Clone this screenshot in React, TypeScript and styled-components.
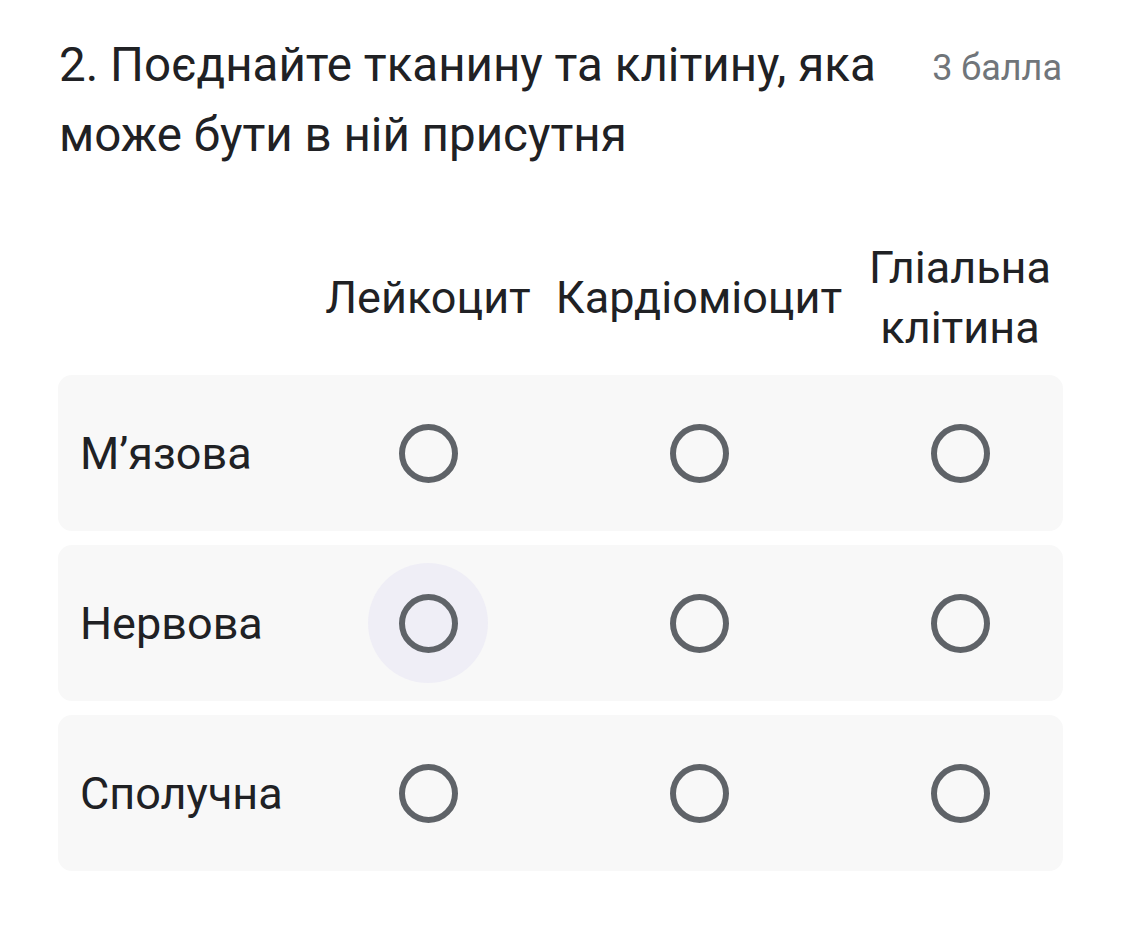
import React from 'react';
import styled, { createGlobalStyle } from 'styled-components';

const GlobalStyle = createGlobalStyle`
  html, body {
    margin: 0;
    padding: 0;
    background: #ffffff;
    font-family: Roboto, "Noto Sans", Arial, sans-serif;
    color: #202124;
  }
`;

const Page = styled.div`
  width: 1131px;
  padding: 30px 68px 0 58px;
  box-sizing: border-box;
`;

const Header = styled.div`
  display: flex;
  align-items: flex-start;
  justify-content: space-between;
`;

const Title = styled.div`
  font-size: 47.5px;
  line-height: 70px;
  padding-left: 1px;
  max-width: 850px;
`;

const Points = styled.div`
  font-size: 36px;
  line-height: 76px;
  color: #70757a;
  white-space: nowrap;
  margin-right: 1px;
`;

const Grid = styled.div`
  margin-top: 69px;
  display: flex;
  flex-direction: column;
  gap: 14px;
`;

const columns = '257px 226px 316px 206px';

const HeadRow = styled.div`
  display: grid;
  grid-template-columns: ${columns};
  align-items: center;
  min-height: 122px;
  padding-bottom: 0;
`;

const ColHead = styled.div`
  text-align: center;
  font-size: 45px;
  line-height: 60px;
  margin-top: -4px;
`;

const Row = styled.div`
  display: grid;
  grid-template-columns: ${columns};
  align-items: center;
  height: 156px;
  background: #f8f8f8;
  border-radius: 14px;
`;

const RowLabel = styled.div`
  font-size: 45px;
  padding-left: 22px;
`;

const Cell = styled.div`
  display: flex;
  justify-content: center;
  align-items: center;
`;

const Halo = styled.div<{ $active?: boolean }>`
  width: 120px;
  height: 120px;
  border-radius: 50%;
  display: flex;
  align-items: center;
  justify-content: center;
  background: ${({ $active }) => ($active ? '#efeef6' : 'transparent')};
`;

const Radio = styled.div`
  width: 59px;
  height: 59px;
  box-sizing: border-box;
  border: 6px solid #5f6368;
  border-radius: 50%;
`;

const cols = ['Лейкоцит', 'Кардіоміоцит', 'Гліальна клітина'];
const rows = ['М’язова', 'Нервова', 'Сполучна'];

export default function App() {
  return (
    <>
      <GlobalStyle />
      <Page>
        <Header>
          <Title>2. Поєднайте тканину та клітину, яка може бути в ній присутня</Title>
          <Points>3 балла</Points>
        </Header>
        <Grid>
          <HeadRow>
            <div />
            <ColHead>{cols[0]}</ColHead>
            <ColHead>{cols[1]}</ColHead>
            <ColHead>
              Гліальна
              <br />
              клітина
            </ColHead>
          </HeadRow>
          {rows.map((label, r) => (
            <Row key={label}>
              <RowLabel>{label}</RowLabel>
              {cols.map((c, i) => (
                <Cell key={c}>
                  <Halo $active={r === 1 && i === 0}>
                    <Radio />
                  </Halo>
                </Cell>
              ))}
            </Row>
          ))}
        </Grid>
      </Page>
    </>
  );
}
